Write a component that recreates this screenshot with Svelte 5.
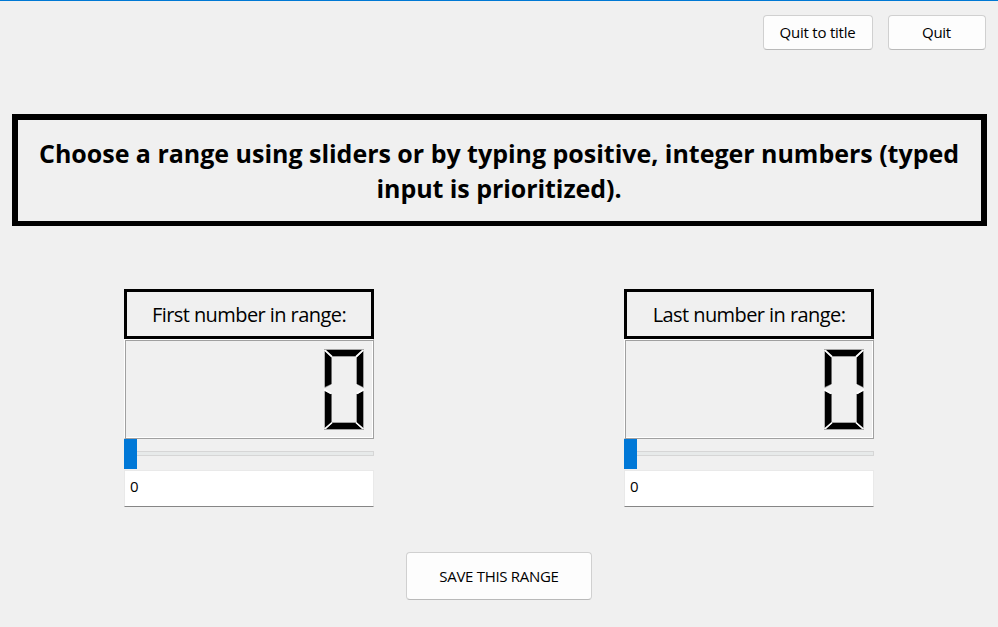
<script>
  const ranges = [
    { id: 'first', label: 'First number in range:', value: 0 },
    { id: 'last', label: 'Last number in range:', value: 0 }
  ];
</script>

<main>
  <nav>
    <button class="title-button"><span>Quit to title</span></button>
    <button class="quit-button"><span>Quit</span></button>
  </nav>

  <h1>
    <span class="one">Choose a range using sliders or by typing positive, integer numbers (typed</span>
    <span class="two">input is prioritized).</span>
  </h1>

  <section class="ranges">
    {#each ranges as range (range.id)}
      <div class="range">
        <div class="label">{range.label}</div>
        <div class="lcd">
          <svg width="42" height="84" viewBox="0 0 42 84" role="img" aria-label={String(range.value)}>
            <g fill="none" stroke="#a0a0a0">
              <path d="M1 1.5H41M9 8.5H33M8.5 9V36L2 39.5M40.5 2V39.5L34 36M8.5 46V75M40.5 43V81M1 81.5H41M9 74.5H33" />
              <path d="M1.7 2V39.5M1.7 43V81M33.5 9V36M33.5 46V75" />
            </g>
            <g fill="#000">
              <path d="M3 2H39L32.5 8H9.5Z" />
              <path d="M2 3L8.3 9V36L2 39Z" />
              <path d="M40 3L34 9V36L40 39Z" />
              <path d="M2 43L8.3 46V75L2 80.5Z" />
              <path d="M40 43L34 46V75L40 80.5Z" />
              <path d="M9.5 75H32.5L39 81H3Z" />
            </g>
            <path d="M1.5 2L9 9M40.5 2L33 9M1 41.5L8 45.5M41 41.5L34 45.5M1.5 81L9 74.5M40.5 81L33 74.5" fill="none" stroke="#fff" stroke-width="1.5" />
          </svg>
        </div>
        <div class="slider"><div class="handle"></div><div class="track"></div></div>
        <div class="field">{range.value}</div>
      </div>
    {/each}
  </section>

  <button class="save"><span>SAVE THIS RANGE</span></button>
</main>

<style>
  :global(body) { margin: 0; background: #f0f0f0; }
  * { box-sizing: border-box; }
  main {
    width: 998px;
    height: 627px;
    border-top: 1px solid #0078d4;
    background: #f0f0f0;
    color: #000;
    font-family: "Open Sans", "Noto Sans", sans-serif;
    display: flex;
    flex-direction: column;
    overflow: hidden;
  }
  nav { display: flex; justify-content: flex-end; gap: 15px; padding: 14px 12px 0 0; }
  button {
    display: flex;
    align-items: center;
    justify-content: center;
    padding: 0 1px 2px 0;
    border: 1px solid #d0d0d0;
    border-bottom-color: #b9b9b9;
    border-radius: 4px;
    background: #fdfdfd;
    color: #000;
    font: 15px/20px "Open Sans", "Noto Sans", sans-serif;
    white-space: nowrap;
  }
  .title-button { width: 110px; height: 35px; letter-spacing: -0.22px; }
  .quit-button { width: 98px; height: 35px; letter-spacing: -0.3px; }
  h1 {
    width: 975px;
    height: 112px;
    margin: 64px 0 0 12px;
    padding: 16px 1px 0 0;
    border: 6px solid #000;
    border-bottom-width: 5px;
    font-size: 25px;
    line-height: 35px;
    font-weight: 700;
    display: flex;
    flex-direction: column;
    align-items: center;
    white-space: nowrap;
  }
  .one { letter-spacing: -0.02px; }
  .two { letter-spacing: -0.06px; }
  .ranges { display: flex; gap: 250px; margin: 63px 0 0 124px; }
  .range { width: 250px; }
  .label {
    height: 50px;
    border: 3px solid #000;
    font-size: 20px;
    line-height: 46px;
    text-align: center;
    white-space: nowrap;
    letter-spacing: -0.57px;
  }
  .lcd {
    height: 100px;
    border: 1px solid;
    border-color: #fff #a0a0a0 #a0a0a0 #fff;
    box-shadow: inset 1px 1px #a0a0a0, inset -1px -1px #fff;
    display: flex;
    justify-content: flex-end;
    padding: 8px 8px 0 0;
  }
  svg { display: block; }
  .slider { height: 30px; display: flex; }
  .track { flex: 1; height: 5px; margin-top: 12px; border: 1px solid #d6d6d6; border-left: 0; background: #e7eaea; }
  .handle { width: 13px; height: 30px; background: #0078d7; }
  .field {
    height: 37px;
    margin-top: 1px;
    border: 1px solid #e9e9e9;
    border-bottom-color: #868686;
    background: #fff;
    padding-left: 5px;
    font-size: 15px;
    line-height: 30px;
    letter-spacing: -0.3px;
  }
  .save { width: 186px; height: 48px; margin: 45px 0 0 406px; padding: 0; letter-spacing: -0.3px; }
</style>
